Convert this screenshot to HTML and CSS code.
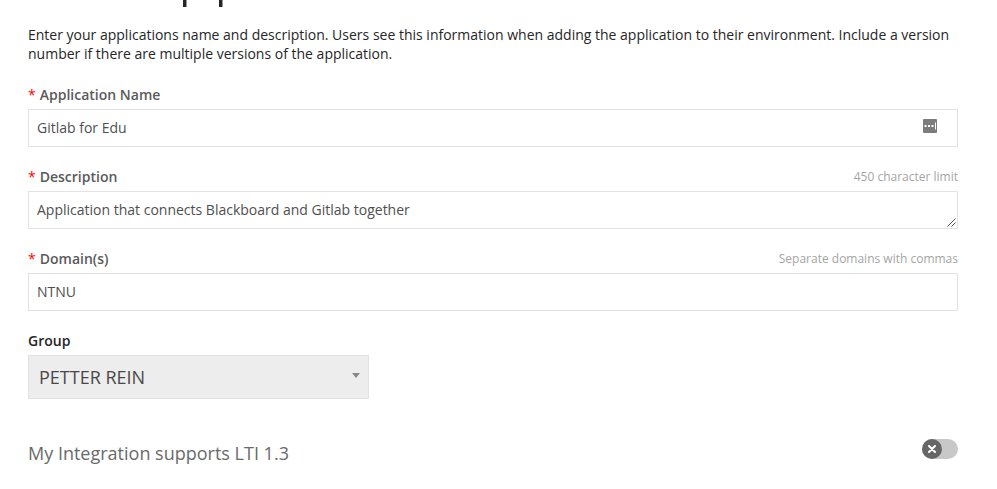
FILE: index.html
```html
<!DOCTYPE html>
<html lang="en">
<head>
<meta charset="utf-8">
<title>Application</title>
<link rel="stylesheet" href="styles.css">
</head>
<body>
<main class="form">
  <div class="heading-edge"><i></i><i></i></div>
  <p class="intro">Enter your applications name and description. Users see this information when adding the application to their environment. Include a version number if there are multiple versions of the application.</p>

  <section class="field">
    <div class="label-row"><span class="label"><b class="star">*</b> <span>Application Name</span></span></div>
    <div class="input"><span>Gitlab for Edu</span>
      <svg class="manager" width="14" height="14" viewBox="0 0 14 14"><rect width="14" height="14" rx="1" fill="#7c7c7c"/><path d="M1.500 6h2v2h-2zM5 6h2v2H5zM8.500 6h2v2h-2zM12 3.500h1v7h-1z" fill="#fff"/></svg>
    </div>
  </section>

  <section class="field">
    <div class="label-row"><span class="label"><b class="star">*</b> <span>Description</span></span><span class="hint">450 character limit</span></div>
    <div class="input"><span>Application that connects Blackboard and Gitlab together</span>
      <svg class="grip" width="9" height="9" viewBox="0 0 9 9"><path d="M.5 8.500l8-8M4.500 8.500l4-4" stroke="#555" fill="none"/></svg>
    </div>
  </section>

  <section class="field">
    <div class="label-row"><span class="label"><b class="star">*</b> <span>Domain(s)</span></span><span class="hint">Separate domains with commas</span></div>
    <div class="input"><span>NTNU</span></div>
  </section>

  <section class="field">
    <div class="label-row"><span class="label dark">Group</span></div>
    <div class="select"><span>PETTER REIN</span>
      <svg class="arrow" width="8" height="5" viewBox="0 0 8 5"><path d="M0 0h8L4 5z" fill="#888"/></svg>
    </div>
  </section>

  <section class="toggle-row">
    <span class="toggle-label">My Integration supports LTI 1.3</span>
    <span class="toggle"><span class="knob"><svg width="8" height="8" viewBox="0 0 8 8"><path d="M1 1l6 6M7 1L1 7" stroke="#fff" stroke-width="2" stroke-linecap="round"/></svg></span></span>
  </section>
</main>
</body>
</html>
```
FILE: styles.css
```css
* { box-sizing: border-box; }
body { margin: 0; background: #fff; font: 14px/19px "Open Sans", sans-serif; color: #262626; overflow: hidden; }
.form { width: 930px; margin-left: 28px; }
.heading-edge { display: flex; gap: 32px; height: 7px; padding-left: 155px; }
.heading-edge i { width: 4px; background: #262626; border: solid #999; border-width: 0 1px 0 0; }
.intro { margin: 18px 0 22px; }
.field { margin-bottom: 20px; }
.label-row { display: flex; justify-content: space-between; align-items: center; height: 19px; margin-bottom: 5px; }
.label { display: flex; gap: 4px; font-weight: 600; color: #5a5a5a; }
.dark { color: #262626; }
.star { color: #f00; font-weight: 400; }
.hint { font-size: 12px; color: #a5a5a5; }
.input { position: relative; display: flex; align-items: center; height: 38px; padding: 0 8px 1px; border: 1px solid #e2e2e2; color: #4f4f4f; }
.manager { margin-left: auto; margin-right: 12px; margin-top: -3px; }
.grip { position: absolute; right: 1px; bottom: 1px; }
.select { display: flex; align-items: center; justify-content: space-between; width: 341px; height: 44px; padding: 0 8px 0 10px; border: 1px solid #e2e2e2; background: #ededed; font-size: 18px; color: #484848; }
.arrow { margin-bottom: 3px; }
.toggle-row { display: flex; justify-content: space-between; margin-top: 40px; }
.toggle-label { font-size: 18px; line-height: 28px; color: #6a6a6a; }
.toggle { width: 36px; height: 20px; border-radius: 10px; background: #c8c8c8; }
.knob { display: flex; align-items: center; justify-content: center; width: 20px; height: 20px; border-radius: 50%; background: #666; }
```
